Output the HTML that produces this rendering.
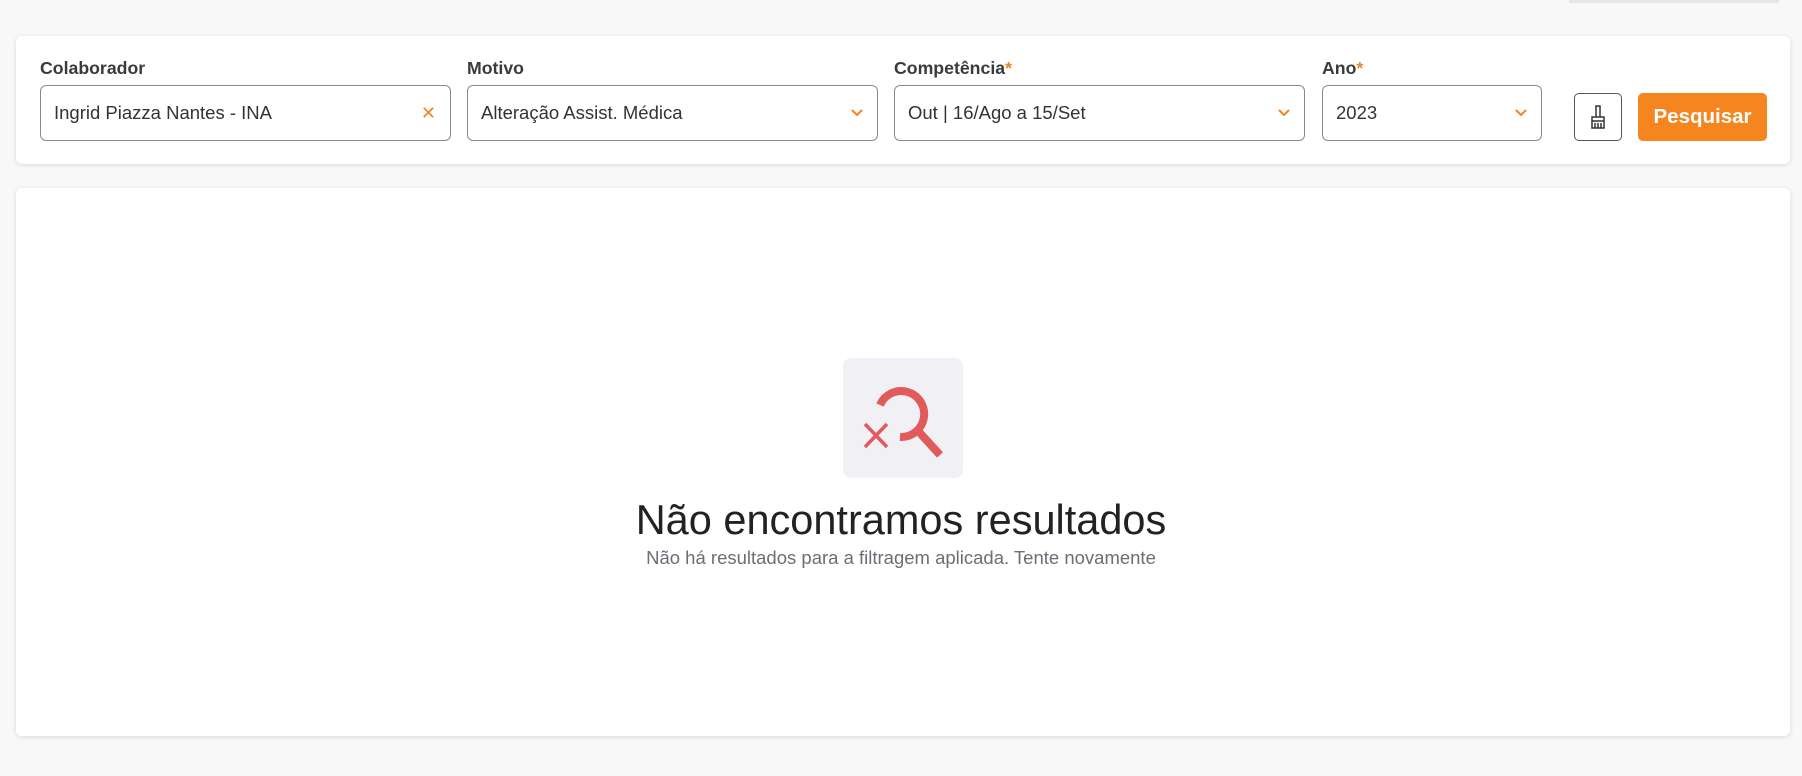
<!DOCTYPE html>
<html><head><meta charset="utf-8"><style>
*{box-sizing:border-box;margin:0;padding:0}
body{width:1802px;height:776px;background:#f8f8f8;font-family:"Liberation Sans",sans-serif;position:relative;overflow:hidden;color:#333}
.tab{position:absolute;left:1569px;top:0;width:210px;height:3px;background:#e6e6e6}
.card{position:absolute;left:16px;width:1774px;background:#fff;border-radius:6px;box-shadow:0 1px 5px rgba(0,0,0,.13)}
.lbl{position:absolute;top:58px;font-size:17.7px;font-weight:bold;color:#3a3a3a}
.lbl b{color:#f5821f}
.inp{position:absolute;top:85px;height:56px;border:1px solid #8a8a8a;border-radius:6px;font-size:18.5px;color:#333;padding-left:13px;line-height:54px}
.ic{position:absolute;right:14px;top:0;color:#f5821f;font-size:16px}
.btn{position:absolute;top:93px;height:48px;border-radius:5px}
</style></head><body>
<div class="tab"></div>
<div class="card" style="top:36px;height:128px"></div>
<div class="lbl" style="left:40px">Colaborador</div>
<div class="lbl" style="left:467px">Motivo</div>
<div class="lbl" style="left:894px">Competência<b>*</b></div>
<div class="lbl" style="left:1322px">Ano<b>*</b></div>
<div class="inp" style="left:40px;width:411px">Ingrid Piazza Nantes - INA<span class="ic" style="font-size:18px">✕</span></div>
<div class="inp" style="left:467px;width:411px">Alteração Assist. Médica<span class="ic"><svg width="12" height="8" viewBox="0 0 12 8"><path d="M1 1l5 5 5-5" stroke="#f5821f" stroke-width="2" fill="none"/></svg></span></div>
<div class="inp" style="left:894px;width:411px">Out | 16/Ago a 15/Set<span class="ic"><svg width="12" height="8" viewBox="0 0 12 8"><path d="M1 1l5 5 5-5" stroke="#f5821f" stroke-width="2" fill="none"/></svg></span></div>
<div class="inp" style="left:1322px;width:220px">2023<span class="ic"><svg width="12" height="8" viewBox="0 0 12 8"><path d="M1 1l5 5 5-5" stroke="#f5821f" stroke-width="2" fill="none"/></svg></span></div>
<div class="btn" style="left:1574px;width:48px;border:1px solid #555">
<svg width="46" height="46" viewBox="0 0 46 46"><path d="M21 12h4v11h-4z M17 23h12v11H17z M20 29v5 M23 29v5 M26 29v5 M17 27h12" stroke="#333" stroke-width="1.5" fill="none"/></svg></div>
<div class="btn" style="left:1638px;width:129px;background:#f5861f;color:#fff;font-weight:bold;font-size:20.5px;text-align:center;line-height:48px">Pesquisar</div>
<div class="card" style="top:188px;height:548px"></div>
<div style="position:absolute;left:843px;top:358px;width:120px;height:120px;background:#f1f0f5;border-radius:8px">
<svg width="120" height="120" viewBox="0 0 120 120"><path d="M37 47 A23 23 0 1 1 57 79" stroke="#e25b5b" stroke-width="8" fill="none"/><path d="M76 74L97 97" stroke="#e25b5b" stroke-width="8"/><path d="M22 66L44 89M44 66L22 89" stroke="#e25b5b" stroke-width="3.5"/></svg></div>
<div style="position:absolute;left:0;width:1802px;top:496px;text-align:center;font-size:41.5px;color:#222">Não encontramos resultados</div>
<div style="position:absolute;left:0;width:1802px;top:547px;text-align:center;font-size:18.5px;color:#6b6e76">Não há resultados para a filtragem aplicada. Tente novamente</div>
</body></html>
